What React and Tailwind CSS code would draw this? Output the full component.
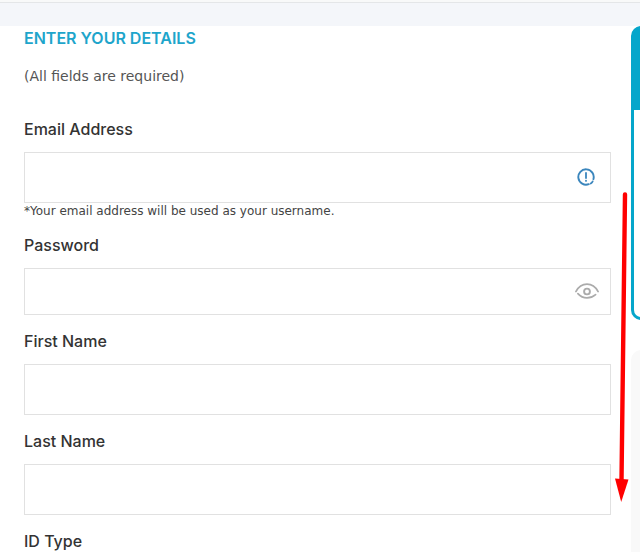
function InfoIcon() {
  return (
    <svg viewBox="0 0 18 18" className="size-[18px]" fill="none" stroke="#3b86bd" strokeLinecap="round" aria-hidden="true">
      <path d="M11.800 16.200A7.700 7.700 0 1 1 16.400 11.200" strokeWidth="1.900" />
      <path d="M13.700 15.500Q15 14.700 15.700 13.300" strokeWidth="1.700" />
      <path d="M9 5v5" strokeWidth="1.800" />
      <path d="M9 12.600v.3" strokeWidth="1.800" />
    </svg>
  );
}

function EyeIcon() {
  return (
    <svg viewBox="0 0 24 16" className="h-4 w-6" fill="none" stroke="#ababab" strokeLinecap="round" aria-hidden="true">
      <path d="M.9 8.600C3.600 3.600 7.400 1.200 12 1.200s8.400 2.400 11.100 7.400" strokeWidth="1.700" />
      <path d="M2.900 10.600C5.400 13.400 8.400 14.900 12 14.900c3.200 0 6-1.100 8.600-3.300" strokeWidth="1.700" />
      <circle cx="12" cy="8.500" r="2.900" strokeWidth="1.900" />
    </svg>
  );
}

function Field({ id, label, type = "text", short = false, note, children }) {
  return (
    <div>
      <label htmlFor={id} className="block text-base leading-6 font-medium text-[#333333]">
        {label}
      </label>
      <div className="relative mt-[11px]">
        <input
          id={id}
          type={type}
          className={
            (short ? "h-[47px]" : "h-[51px]") +
            " block w-full border border-[#e1e1e1] bg-white pr-12 pl-3 text-base text-[#333333] outline-none"
          }
        />
        {children}
      </div>
      {note && <p className="font-['DejaVu_Sans',sans-serif] text-xs leading-4 text-[#444444]">{note}</p>}
    </div>
  );
}

export default function App() {
  return (
    <div className="h-screen overflow-hidden bg-white font-['Inter','Liberation_Sans',sans-serif]">
      <header className="h-[26px] bg-[#f4f6fa]">
        <div className="h-[3px] border-b border-[#e4e6e8] bg-[#f8f9f9]" />
      </header>
      <main className="flex gap-5 pl-6">
        <form className="min-w-0 flex-1">
          <h1 className="text-base leading-6 font-semibold text-[#1ea5cb]">ENTER YOUR DETAILS</h1>
          <p className="mt-4 font-['DejaVu_Sans',sans-serif] text-sm leading-5 text-[#555555]">(All fields are required)</p>
          <div className="mt-[31px] flex flex-col gap-[14px]">
            <Field id="email" label="Email Address" type="email" note="*Your email address will be used as your username.">
              <button type="button" aria-label="Email information" className="absolute top-4 right-4">
                <InfoIcon />
              </button>
            </Field>
            <Field id="password" label="Password" type="password" short>
              <button type="button" aria-label="Show password" className="absolute top-[15px] right-3">
                <EyeIcon />
              </button>
            </Field>
            <Field id="first-name" label="First Name" />
            <Field id="last-name" label="Last Name" />
            <Field id="id-type" label="ID Type" />
          </div>
        </form>
        <aside className="w-[9px] shrink-0">
          <div className="h-[294px] w-72 overflow-hidden rounded-[10px] border-[3px] border-[#05a6cb] bg-[#05a6cb]">
            <div className="mt-[81px] h-full bg-white" />
          </div>
          <div className="mt-[30px] h-[400px] w-72 rounded-[10px] bg-[#f9f9f9]" />
        </aside>
      </main>
      <svg viewBox="0 0 16 312" className="absolute top-[191px] right-[9px] h-[312px] w-4" fill="#ff0000" aria-hidden="true">
        <path d="M10 3.500L6.500 290" stroke="#ff0000" strokeWidth="4.400" strokeLinecap="round" />
        <path d="M0 287.500L13.500 288.500L6.200 311Z" />
      </svg>
    </div>
  );
}
